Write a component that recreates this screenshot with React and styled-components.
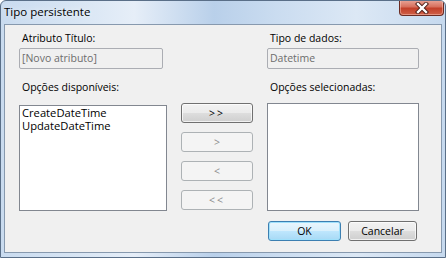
import React from "react";
import styled, { createGlobalStyle, css } from "styled-components";

const GlobalStyle = createGlobalStyle`
  html, body {
    margin: 0;
    padding: 0;
    background: #ffffff;
  }
  body {
    font-family: "Open Sans", "Noto Sans", sans-serif;
  }
`;

const Window = styled.div`
  width: 446px;
  height: 258px;
  box-sizing: border-box;
  display: flex;
  flex-direction: column;
  border: 1px solid #5a6f88;
  border-radius: 6px 6px 0 0;
  background: linear-gradient(
    90deg,
    #c9dbef 0%,
    #d9e6f4 18%,
    #e6eef8 30%,
    #b9d0ea 48%,
    #cadcf0 62%,
    #dce8f5 80%,
    #c6d9ee 100%
  );
  overflow: hidden;
`;

const TitleBar = styled.div`
  height: 23px;
  display: flex;
  align-items: flex-start;
  justify-content: space-between;
  flex-shrink: 0;
`;

const Title = styled.span`
  padding: 3px 0 0 3px;
  font-size: 11.5px;
  color: #000;
  text-shadow: 0 0 6px rgba(255, 255, 255, 0.9);
`;

const CloseButton = styled.div`
  width: 45px;
  height: 16px;
  margin-right: 1px;
  margin-top: -1px;
  box-sizing: border-box;
  border: 1px solid #6b2b22;
  border-top: none;
  border-radius: 0 0 4px 4px;
  background: linear-gradient(180deg, #e9a79a 0%, #d7705d 45%, #c2402a 55%, #cf6047 100%);
  box-shadow: inset 0 0 0 1px rgba(255, 210, 200, 0.45);
  display: flex;
  align-items: center;
  justify-content: center;
`;

const Client = styled.div`
  flex: 1;
  margin: 0 3px 4px 3px;
  border: 1px solid #8799ae;
  background: #f0f0f0;
  display: grid;
  grid-template-columns: 148px 72px 152px;
  grid-auto-rows: auto;
  align-content: start;
  align-items: start;
  column-gap: 14px;
  padding: 7px 0 0 14px;
  font-size: 10.5px;
  color: #000;
`;

const Label = styled.div`
  padding-left: 3px;
  line-height: 13px;
  white-space: nowrap;
  grid-column: ${({ $col }) => $col};
  margin-top: ${({ $top }) => $top || 0}px;
`;

const TextBox = styled.div`
  grid-column: ${({ $col }) => $col};
  width: ${({ $w }) => $w}px;
  height: 21px;
  box-sizing: border-box;
  margin-top: 3px;
  border: 1px solid #abadb3;
  border-radius: 2px;
  background: #f0f0f0;
  color: #6d6d6d;
  padding: 2px 0 0 2px;
  line-height: 15px;
  font-size: 10.5px;
`;

const ListBox = styled.div`
  grid-column: ${({ $col }) => $col};
  height: ${({ $h }) => $h}px;
  margin-top: ${({ $top }) => $top}px;
  box-sizing: border-box;
  border: 1px solid #828790;
  background: #ffffff;
  padding: 0 2px;
  font-size: 11.2px;
`;

const ListItem = styled.div`
  line-height: 13px;
  white-space: nowrap;
`;

const MoveButtons = styled.div`
  grid-column: 2;
  margin-top: 9px;
  display: flex;
  flex-direction: column;
  gap: 9px;
`;

const Button = styled.div`
  width: ${({ $w }) => $w || 72}px;
  height: 20px;
  box-sizing: border-box;
  border: 1px solid #707070;
  border-radius: 3px;
  background: linear-gradient(180deg, #f2f2f2 0%, #ebebeb 48%, #dddddd 52%, #cfcfcf 100%);
  box-shadow: inset 0 0 0 1px rgba(255, 255, 255, 0.7);
  display: flex;
  align-items: center;
  justify-content: center;
  font-size: 10.5px;
  color: #000;
  letter-spacing: ${({ $spread }) => ($spread ? "2px" : "0")};

  ${({ $disabled }) =>
    $disabled &&
    css`
      border-color: #adb2b5;
      background: #f4f4f4;
      box-shadow: none;
      color: #8d8d8d;
    `}

  ${({ $default }) =>
    $default &&
    css`
      border-color: #3c7fb1;
      background: linear-gradient(180deg, #eaf6fd 0%, #d9f0fc 48%, #bee6fd 52%, #a7d9f5 100%);
      box-shadow: inset 0 0 0 1px #9fe0fb;
    `}
`;

const Footer = styled.div`
  grid-column: 3;
  margin-top: 10px;
  padding-left: 1px;
  display: flex;
  gap: 7px;
`;

const CloseIcon = () => (
  <svg width="14" height="12" viewBox="0 0 14 12">
    <path d="M3 2 L11 10 M11 2 L3 10" stroke="#4a1a14" strokeWidth="4.2" strokeLinecap="square" />
    <path d="M3 2 L11 10 M11 2 L3 10" stroke="#ffffff" strokeWidth="2.4" strokeLinecap="square" />
  </svg>
);

export default function App() {
  return (
    <>
      <GlobalStyle />
      <Window>
        <TitleBar>
          <Title>Tipo persistente</Title>
          <CloseButton>
            <CloseIcon />
          </CloseButton>
        </TitleBar>
        <Client>
          <Label $col={1}>Atributo Título:</Label>
          <Label $col={3}>Tipo de dados:</Label>

          <TextBox $col={1} $w={144}>[Novo atributo]</TextBox>
          <TextBox $col={3} $w={152}>Datetime</TextBox>

          <Label $col={1} $top={12}>Opções disponíveis:</Label>
          <Label $col={3} $top={12}>Opções selecionadas:</Label>

          <ListBox $col={1} $top={11} $h={106}>
            <ListItem>CreateDateTime</ListItem>
            <ListItem>UpdateDateTime</ListItem>
          </ListBox>
          <MoveButtons>
            <Button $spread>&gt;&gt;</Button>
            <Button $disabled>&gt;</Button>
            <Button $disabled>&lt;</Button>
            <Button $disabled $spread>&lt;&lt;</Button>
          </MoveButtons>
          <ListBox $col={3} $top={9} $h={108} />

          <Footer>
            <Button $default $w={73}>OK</Button>
            <Button $w={69}>Cancelar</Button>
          </Footer>
        </Client>
      </Window>
    </>
  );
}
